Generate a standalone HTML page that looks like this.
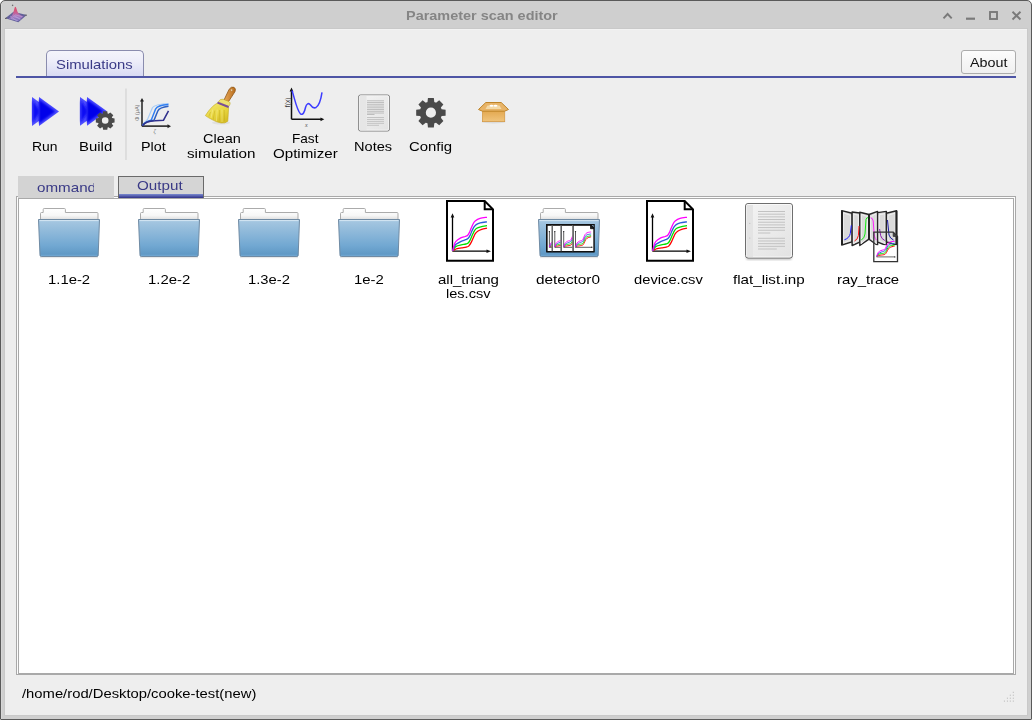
<!DOCTYPE html>
<html><head><meta charset="utf-8">
<style>
*{margin:0;padding:0;box-sizing:border-box}
html,body{width:1032px;height:720px;overflow:hidden;background:#ffffff}
body{position:relative;font-family:"Liberation Sans",sans-serif;font-size:13px}
.a{position:absolute}
.t{position:absolute;white-space:nowrap;font-size:13px;line-height:15px;transform-origin:0 0}
</style></head><body>
<div class="a" style="left:0;top:0;width:1032px;height:720px;background:#cfcfcf;border:1px solid #5a5a5a;border-radius:5px 5px 1px 1px"></div>
<div class="a" style="left:1px;top:4px;width:1px;height:715px;background:#d7d7d7"></div>
<div class="a" style="left:4px;top:28px;width:1024px;height:688px;background:#c9c9c9"></div>
<div class="a" style="left:5px;top:29px;width:1022px;height:686px;background:#eeeeee;border-top:1px solid #f3f3f3"></div>
<div class="a" style="left:46px;top:50px;width:98px;height:27px;border:1px solid #8a8cae;border-bottom:none;border-radius:5px 5px 0 0;background:linear-gradient(#f4f4fb 0%,#ededf9 40%,#d7d9f3 100%)"></div>
<div class="a" style="left:16px;top:76px;width:1000px;height:2px;background:#4e55a5"></div>
<div class="a" style="left:961px;top:50px;width:55px;height:24px;border:1px solid #acacac;border-radius:3px;background:linear-gradient(#fcfcfc,#f0f0f0)"></div>
<div class="a" style="left:16px;top:196px;width:1000px;height:479px;border:1px solid #a9a9a9;background:#fdfdfd"></div>
<div class="a" style="left:18px;top:198px;width:996px;height:476px;border:1px solid #a9a9a9;background:#ffffff"></div>
<div class="a" style="left:18px;top:176px;width:96px;height:22px;background:#d3d3d3"></div>
<div class="a" style="left:118px;top:176px;width:86px;height:22px;border:1px solid #6a6a6a;border-bottom:none;background:#d5d5d5"></div>
<div class="a" style="left:119px;top:194px;width:84px;height:4px;background:linear-gradient(#7b8bd0,#2f3088)"></div>
<svg class="a" style="left:0;top:0" width="1032" height="720" viewBox="0 0 1032 720"><defs>
<filter id="bl1" x="-20%" y="-20%" width="140%" height="140%"><feGaussianBlur stdDeviation="0.9"/></filter>
<linearGradient id="paperg" x1="0" y1="0" x2="0" y2="1"><stop offset="0" stop-color="#ffffff"/><stop offset="0.6" stop-color="#f7f7f7"/><stop offset="1" stop-color="#dcdcdc"/></linearGradient>
<linearGradient id="foldg" x1="0" y1="0" x2="0" y2="1"><stop offset="0" stop-color="#a8c8e1"/><stop offset="0.7" stop-color="#72a8d2"/><stop offset="1" stop-color="#5b95c2"/></linearGradient>
<linearGradient id="tabg" x1="0" y1="0" x2="0" y2="1"><stop offset="0" stop-color="#f3f3fb"/><stop offset="0.45" stop-color="#ececf8"/><stop offset="1" stop-color="#d6d8f2"/></linearGradient>
<linearGradient id="btng" x1="0" y1="0" x2="0" y2="1"><stop offset="0" stop-color="#fbfbfb"/><stop offset="1" stop-color="#efefef"/></linearGradient>
<linearGradient id="pageg" x1="0" y1="0" x2="1" y2="1"><stop offset="0" stop-color="#f4f4f4"/><stop offset="1" stop-color="#e2e2e2"/></linearGradient>
<linearGradient id="runA" x1="0" y1="0" x2="0" y2="1"><stop offset="0" stop-color="#4848ff"/><stop offset="0.5" stop-color="#0000f2"/><stop offset="1" stop-color="#4848ff"/></linearGradient>
<linearGradient id="boxg" x1="0" y1="0" x2="0" y2="1"><stop offset="0" stop-color="#e3a850"/><stop offset="1" stop-color="#f0c47c"/></linearGradient>
<linearGradient id="handleg" x1="0" y1="0" x2="1" y2="0"><stop offset="0" stop-color="#e8a858"/><stop offset="1" stop-color="#b86c1c"/></linearGradient>
<linearGradient id="broomg" x1="0" y1="0" x2="0.6" y2="1"><stop offset="0" stop-color="#f4ea78"/><stop offset="0.6" stop-color="#e8d640"/><stop offset="1" stop-color="#d8c028"/></linearGradient>
<linearGradient id="peakg" x1="0" y1="0" x2="0" y2="1"><stop offset="0" stop-color="#e04c68"/><stop offset="0.35" stop-color="#d05a88"/><stop offset="0.65" stop-color="#a878c0"/><stop offset="1" stop-color="#7a70b8"/></linearGradient>
</defs><path d="M5.3,18.3 L13.5,11.8 L26.7,15 L18.3,22.2 Z" fill="#62609a"/><path d="M8.5,18.8 Q12.8,16.5 14.3,9 Q15.3,4.8 16.5,8.8 Q18,15.5 23.5,16.3 L18.3,21.2 Z" fill="url(#peakg)"/><path d="M11,18.5 L18,20.5 M13,16.5 L20,18.5 M15,14.8 L22,16.6 M10,16 L17,21 M13.5,15 L20.5,19.5" stroke="#c8b8e8" stroke-width="0.6" opacity="0.7"/><line x1="12" y1="5" x2="13.2" y2="5.6" stroke="#666" stroke-width="1.2"/><line x1="5" y1="18.5" x2="7" y2="18" stroke="#555" stroke-width="1"/><line x1="24.5" y1="15.2" x2="27" y2="15.2" stroke="#666" stroke-width="1"/><path d="M943.5,18.3 L947.6,14 L951.7,18.3" fill="none" stroke="#7a7a7a" stroke-width="1.9"/><rect x="966" y="17.6" width="9" height="2.2" fill="#7a7a7a"/><rect x="990" y="12" width="7" height="7" fill="none" stroke="#7a7a7a" stroke-width="1.9"/><path d="M1012.5,11.7 L1020.5,19.5 M1020.5,11.7 L1012.5,19.5" fill="none" stroke="#7a7a7a" stroke-width="1.9"/><path d="M32,97 L32,126 L52,111.5 Z" fill="#5050ff"/><path d="M32.8,100 L32.8,123 L39,113.82 L39,109.18 Z" fill="#1010f4" filter="url(#bl1)"/><path d="M39,97 L39,126 L59,111.5 Z" fill="#4c4cff"/><path d="M39,99.6 L39,123.4 L55.4,111.5 Z" fill="#0000ea" filter="url(#bl1)"/><path d="M80,97 L80,125.7 L100,111.35 Z" fill="#5050ff"/><path d="M80.8,100 L80.8,122.7 L87,113.65 L87,109.05 Z" fill="#1010f4" filter="url(#bl1)"/><path d="M87,97 L87,125.7 L107,111.35 Z" fill="#4c4cff"/><path d="M87,99.6 L87,123.10000000000001 L103.4,111.35 Z" fill="#0000ea" filter="url(#bl1)"/><path d="M102.78,113.51 L103.10,111.13 L107.30,111.13 L107.62,113.51 L107.78,113.57 L107.95,113.63 L108.11,113.70 L108.28,113.77 L108.44,113.85 L110.34,112.39 L113.31,115.36 L111.85,117.26 L111.93,117.42 L112.00,117.59 L112.07,117.75 L112.13,117.92 L112.19,118.08 L114.57,118.40 L114.57,122.60 L112.19,122.92 L112.13,123.08 L112.07,123.25 L112.00,123.41 L111.93,123.58 L111.85,123.74 L113.31,125.64 L110.34,128.61 L108.44,127.15 L108.28,127.23 L108.11,127.30 L107.95,127.37 L107.78,127.43 L107.62,127.49 L107.30,129.87 L103.10,129.87 L102.78,127.49 L102.62,127.43 L102.45,127.37 L102.29,127.30 L102.12,127.23 L101.96,127.15 L100.06,128.61 L97.09,125.64 L98.55,123.74 L98.47,123.58 L98.40,123.41 L98.33,123.25 L98.27,123.08 L98.21,122.92 L95.83,122.60 L95.83,118.40 L98.21,118.09 L98.27,117.92 L98.33,117.75 L98.40,117.59 L98.47,117.42 L98.55,117.26 L97.09,115.36 L100.06,112.39 L101.96,113.85 L102.12,113.77 L102.29,113.70 L102.45,113.63 L102.62,113.57 Z M101.90,120.50 a3.3,3.3 0 1,0 6.6,0 a3.3,3.3 0 1,0 -6.6,0 Z" fill="#4a4a4a" fill-rule="evenodd"/><line x1="126" y1="88.5" x2="126" y2="160" stroke="#cdcdcd" stroke-width="1"/><path d="M142,126.2 L142,100.5 M142,126.2 L168,126.2" fill="none" stroke="#3a3a3a" stroke-width="1.7"/><path d="M140,101.5 L142,98 L144,101.5 Z M167.5,124.2 L171,126.2 L167.5,128.2 Z" fill="#222"/><path d="M142.5,125.5 C144,122.5 146,121 147.5,119.5 L152.5,107.5 C154,105.5 160,104 168.5,103.5" fill="none" stroke="#a9cdf6" stroke-width="1.2"/><path d="M142.5,125.5 C145,121.5 149,120.8 151.3,120 L155.6,109 C157,106.2 161,105 168.5,104.5" fill="none" stroke="#2f7ef2" stroke-width="1.5"/><path d="M142.5,125.5 C145,121.5 150,120.8 154,120.3 L157.8,111 C159.2,108 163,107 168.5,106.3" fill="none" stroke="#2d5fc2" stroke-width="1.5"/><path d="M142.5,125.8 C145,122 150,121 155,120.8 L163.5,120.2 L168.5,110.8" fill="none" stroke="#30308c" stroke-width="1.5"/><text x="0" y="0" transform="translate(138.5,121) rotate(-90)" font-size="5.5" fill="#777" font-family="Liberation Sans">&#934; (&#956;A)</text><text x="153.5" y="133" font-size="6" fill="#777" font-family="Liberation Serif" font-style="italic">&#950;</text><ellipse cx="221" cy="122.8" rx="9" ry="1.8" fill="#000" opacity="0.06"/><path d="M224,100 L229.2,89.2 Q231.3,86.3 234,87.3 Q236.2,88.6 235,91.6 L228.4,101.8 Z" fill="url(#handleg)" stroke="#8e5414" stroke-width="0.8"/><ellipse cx="231.6" cy="90.2" rx="0.9" ry="1.1" fill="#f3e2c0" stroke="#8e5414" stroke-width="0.3"/><path d="M218.3,101.8 Q220,98.6 223,99.2 L229,101.6 Q231,102.6 229.8,104.8 L228.6,106.6 Z" fill="#eee070" stroke="#b8a020" stroke-width="0.5"/><path d="M217.6,103 L228.6,107.3 Q228.3,114 227.8,121.2 Q225,123.6 221,123 Q216,122 212,119.6 Q208,117.6 205.4,115.6 Q208.5,110.5 212.5,106.6 Q215,104.3 217.6,103 Z" fill="url(#broomg)" stroke="#c4aa22" stroke-width="0.6"/><path d="M217.5,102.6 L228.6,107" stroke="#7a4e98" stroke-width="2"/><path d="M210.5,112 L208.8,116.5 M214.8,110.5 L213.2,119.6 M219.6,110 L219.2,122 M224.2,110 L224.6,121.5" stroke="#c2aa20" stroke-width="0.6" opacity="0.8"/><path d="M212.8,109.5 L211,118 M217.2,109.5 L216.4,121 M222,109.5 L222,122" stroke="#fbf4a8" stroke-width="0.6" opacity="0.7"/><path d="M291.5,119.3 L291.5,90 M291.5,119.3 L321,119.3" fill="none" stroke="#111" stroke-width="1.5"/><path d="M289.6,91.5 L291.5,87.5 L293.4,91.5 Z M320.5,117.4 L324.3,119.3 L320.5,121.2 Z" fill="#111"/><path d="M292,90.5 C294.5,98 297,111 300.5,113.8 C303,115.5 304.5,112 305.5,107.5 C306.5,103.5 308.5,102.5 310.5,105 C312,107.2 313.5,108.8 316,107.5 C319,105.5 321,99 322,92.3" fill="none" stroke="#3c3cff" stroke-width="1.5"/><text x="0" y="0" transform="translate(289.8,107.2) rotate(-90)" font-size="6.8" fill="#333" font-family="Liberation Sans">f(x)</text><text x="305" y="126.5" font-size="6" fill="#555" font-family="Liberation Serif" font-style="italic">x</text><rect x="358.5" y="95" width="31" height="36" rx="2" ry="2" fill="url(#pageg)" stroke="#7c7c7c" stroke-width="1"/><rect x="359.3" y="95.8" width="29.4" height="34.4" rx="1.5" fill="none" stroke="#fafafa" stroke-width="0.8"/><rect x="359.5" y="96" width="7" height="34" fill="#e6e6e6"/><line x1="367" y1="100.80" x2="384" y2="100.80" stroke="#bdbdbd" stroke-width="1"/><line x1="367" y1="102.55" x2="384" y2="102.55" stroke="#bdbdbd" stroke-width="1"/><line x1="367" y1="104.30" x2="384" y2="104.30" stroke="#bdbdbd" stroke-width="1"/><line x1="367" y1="106.05" x2="384" y2="106.05" stroke="#bdbdbd" stroke-width="1"/><line x1="367" y1="107.80" x2="384" y2="107.80" stroke="#bdbdbd" stroke-width="1"/><line x1="367" y1="109.55" x2="384" y2="109.55" stroke="#bdbdbd" stroke-width="1"/><line x1="367" y1="111.30" x2="384" y2="111.30" stroke="#bdbdbd" stroke-width="1"/><line x1="367" y1="113.05" x2="384" y2="113.05" stroke="#bdbdbd" stroke-width="1"/><line x1="367" y1="114.5" x2="374.5" y2="114.5" stroke="#bdbdbd" stroke-width="1"/><line x1="367" y1="117.50" x2="384" y2="117.50" stroke="#c3c3c3" stroke-width="1"/><line x1="367" y1="119.45" x2="384" y2="119.45" stroke="#c3c3c3" stroke-width="1"/><line x1="367" y1="121.40" x2="384" y2="121.40" stroke="#c3c3c3" stroke-width="1"/><line x1="367" y1="123.35" x2="384" y2="123.35" stroke="#c3c3c3" stroke-width="1"/><line x1="367" y1="125.3" x2="379" y2="125.3" stroke="#c3c3c3" stroke-width="1"/><path d="M427.51,102.03 L427.95,97.99 L433.85,97.99 L434.29,102.03 L434.65,102.15 L435.01,102.28 L435.36,102.43 L435.71,102.58 L436.05,102.75 L439.21,100.21 L443.39,104.39 L440.85,107.55 L441.02,107.89 L441.17,108.24 L441.32,108.59 L441.45,108.95 L441.57,109.31 L445.61,109.75 L445.61,115.65 L441.57,116.09 L441.45,116.45 L441.32,116.81 L441.17,117.16 L441.02,117.51 L440.85,117.85 L443.39,121.01 L439.21,125.19 L436.05,122.65 L435.71,122.82 L435.36,122.97 L435.01,123.12 L434.65,123.25 L434.29,123.37 L433.85,127.41 L427.95,127.41 L427.51,123.37 L427.15,123.25 L426.79,123.12 L426.44,122.97 L426.09,122.82 L425.75,122.65 L422.59,125.19 L418.41,121.01 L420.95,117.85 L420.78,117.51 L420.63,117.16 L420.48,116.81 L420.35,116.45 L420.23,116.09 L416.19,115.65 L416.19,109.75 L420.23,109.31 L420.35,108.95 L420.48,108.59 L420.63,108.24 L420.78,107.89 L420.95,107.55 L418.41,104.39 L422.59,100.21 L425.75,102.75 L426.09,102.58 L426.44,102.43 L426.79,102.28 L427.15,102.15 Z M425.80,112.70 a5.1,5.1 0 1,0 10.2,0 a5.1,5.1 0 1,0 -10.2,0 Z" fill="#4a4a4a" fill-rule="evenodd"/><ellipse cx="493.5" cy="122" rx="12" ry="1.5" fill="#000" opacity="0.08"/><rect x="482.5" y="110.8" width="22.2" height="10.8" fill="url(#boxg)" stroke="#d49a48" stroke-width="0.8"/><path d="M478.5,109.5 L485.8,102.5 L501.2,102.5 L508.5,109.5 L504.5,111.2 L482.5,111.2 Z" fill="#e8b468" stroke="#bf8428" stroke-width="1"/><path d="M487.5,105.5 L499.5,105.5 L501.5,109 L485.5,109 Z" fill="#f3d9a8"/><ellipse cx="491.5" cy="105.8" rx="2" ry="1" fill="#ffffff"/><ellipse cx="495.5" cy="105.8" rx="2" ry="1" fill="#ffffff"/><rect x="40" y="256.6" width="58" height="1.6" fill="#000" opacity="0.09"/><path d="M40.5,220 L40.5,213.5 Q40.5,212.5 41.5,212.5 L43.2,212.5 L43.2,209.5 Q43.2,208.5 44.2,208.5 L64.4,208.5 Q65.4,208.5 65.4,209.5 L65.4,212.5 L97,212.5 Q98,212.5 98,213.5 L98,220 Z" fill="url(#paperg)" stroke="#ababab" stroke-width="1"/><path d="M38.5,219.5 L99.5,219.5 L98.2,255.3 Q98.1,256.5 96.9,256.5 L41.3,256.5 Q40.1,256.5 40.0,255.3 Z" fill="url(#foldg)" stroke="#6f8aa3" stroke-width="1"/><line x1="39.5" y1="220.6" x2="98.5" y2="220.6" stroke="#d4e6f3" stroke-width="1"/><line x1="41" y1="255.3" x2="97" y2="255.3" stroke="#7db3db" stroke-width="0.8" opacity="0.8"/><rect x="140" y="256.6" width="58" height="1.6" fill="#000" opacity="0.09"/><path d="M140.5,220 L140.5,213.5 Q140.5,212.5 141.5,212.5 L143.2,212.5 L143.2,209.5 Q143.2,208.5 144.2,208.5 L164.4,208.5 Q165.4,208.5 165.4,209.5 L165.4,212.5 L197,212.5 Q198,212.5 198,213.5 L198,220 Z" fill="url(#paperg)" stroke="#ababab" stroke-width="1"/><path d="M138.5,219.5 L199.5,219.5 L198.2,255.3 Q198.1,256.5 196.9,256.5 L141.3,256.5 Q140.1,256.5 140.0,255.3 Z" fill="url(#foldg)" stroke="#6f8aa3" stroke-width="1"/><line x1="139.5" y1="220.6" x2="198.5" y2="220.6" stroke="#d4e6f3" stroke-width="1"/><line x1="141" y1="255.3" x2="197" y2="255.3" stroke="#7db3db" stroke-width="0.8" opacity="0.8"/><rect x="240" y="256.6" width="58" height="1.6" fill="#000" opacity="0.09"/><path d="M240.5,220 L240.5,213.5 Q240.5,212.5 241.5,212.5 L243.2,212.5 L243.2,209.5 Q243.2,208.5 244.2,208.5 L264.4,208.5 Q265.4,208.5 265.4,209.5 L265.4,212.5 L297,212.5 Q298,212.5 298,213.5 L298,220 Z" fill="url(#paperg)" stroke="#ababab" stroke-width="1"/><path d="M238.5,219.5 L299.5,219.5 L298.2,255.3 Q298.1,256.5 296.9,256.5 L241.3,256.5 Q240.1,256.5 240.0,255.3 Z" fill="url(#foldg)" stroke="#6f8aa3" stroke-width="1"/><line x1="239.5" y1="220.6" x2="298.5" y2="220.6" stroke="#d4e6f3" stroke-width="1"/><line x1="241" y1="255.3" x2="297" y2="255.3" stroke="#7db3db" stroke-width="0.8" opacity="0.8"/><rect x="340" y="256.6" width="58" height="1.6" fill="#000" opacity="0.09"/><path d="M340.5,220 L340.5,213.5 Q340.5,212.5 341.5,212.5 L343.2,212.5 L343.2,209.5 Q343.2,208.5 344.2,208.5 L364.4,208.5 Q365.4,208.5 365.4,209.5 L365.4,212.5 L397,212.5 Q398,212.5 398,213.5 L398,220 Z" fill="url(#paperg)" stroke="#ababab" stroke-width="1"/><path d="M338.5,219.5 L399.5,219.5 L398.2,255.3 Q398.1,256.5 396.9,256.5 L341.3,256.5 Q340.1,256.5 340.0,255.3 Z" fill="url(#foldg)" stroke="#6f8aa3" stroke-width="1"/><line x1="339.5" y1="220.6" x2="398.5" y2="220.6" stroke="#d4e6f3" stroke-width="1"/><line x1="341" y1="255.3" x2="397" y2="255.3" stroke="#7db3db" stroke-width="0.8" opacity="0.8"/><rect x="540" y="256.6" width="58" height="1.6" fill="#000" opacity="0.09"/><path d="M540.5,220 L540.5,213.5 Q540.5,212.5 541.5,212.5 L543.2,212.5 L543.2,209.5 Q543.2,208.5 544.2,208.5 L564.4,208.5 Q565.4,208.5 565.4,209.5 L565.4,212.5 L597,212.5 Q598,212.5 598,213.5 L598,220 Z" fill="url(#paperg)" stroke="#ababab" stroke-width="1"/><path d="M538.5,219.5 L599.5,219.5 L598.2,255.3 Q598.1,256.5 596.9,256.5 L541.3,256.5 Q540.1,256.5 540.0,255.3 Z" fill="url(#foldg)" stroke="#6f8aa3" stroke-width="1"/><line x1="539.5" y1="220.6" x2="598.5" y2="220.6" stroke="#d4e6f3" stroke-width="1"/><line x1="541" y1="255.3" x2="597" y2="255.3" stroke="#7db3db" stroke-width="0.8" opacity="0.8"/><clipPath id="dp0"><rect x="546.9" y="224" width="5.399999999999977" height="29"/></clipPath><g clip-path="url(#dp0)"><path d="M546.9,225 L564.4,225 L568.1,228.7 L568.1,251.6 L546.9,251.6 Z" fill="#fff" stroke="#111" stroke-width="1.3"/><path d="M564.4,225 L564.4,228.7 L568.1,228.7 Z" fill="#222" stroke="#111" stroke-width="0.8"/><line x1="549.4" y1="247.3" x2="549.4" y2="231.5" stroke="#333" stroke-width="0.8"/><circle cx="549.4" cy="231.6" r="0.7" fill="#222"/><line x1="549.4" y1="247.3" x2="565.6999999999999" y2="247.3" stroke="#333" stroke-width="0.8"/><circle cx="565.6999999999999" cy="247.3" r="0.7" fill="#222"/><path d="M549.60,247.10 C549.75,247.00 550.16,246.68 550.50,246.52 C550.84,246.35 551.10,246.24 551.62,246.11 C552.15,245.98 552.97,245.87 553.65,245.75 C554.33,245.63 555.15,245.53 555.68,245.39 C556.20,245.26 556.43,245.29 556.80,244.94 C557.18,244.59 557.58,243.91 557.93,243.28 C558.27,242.65 558.56,241.81 558.87,241.16 C559.18,240.51 559.44,239.84 559.77,239.36 C560.10,238.88 560.37,238.60 560.85,238.28 C561.33,237.96 561.95,237.67 562.65,237.43 C563.35,237.19 564.64,236.94 565.03,236.84" fill="none" stroke="#ff0000" stroke-width="0.9"/><path d="M549.60,247.10 C549.71,246.91 550.01,246.32 550.27,245.98 C550.54,245.63 550.65,245.29 551.18,245.03 C551.70,244.77 552.71,244.57 553.43,244.40 C554.14,244.23 554.93,244.13 555.45,244.00 C555.98,243.86 556.24,243.90 556.58,243.59 C556.91,243.28 557.15,242.79 557.48,242.15 C557.80,241.51 558.19,240.46 558.51,239.77 C558.83,239.07 559.10,238.44 559.41,237.97 C559.72,237.49 559.93,237.21 560.40,236.93 C560.87,236.65 561.43,236.50 562.20,236.30 C562.97,236.10 564.56,235.81 565.03,235.72" fill="none" stroke="#00e000" stroke-width="0.9"/><path d="M549.60,247.10 C549.70,246.83 549.94,245.98 550.19,245.48 C550.43,244.99 550.55,244.57 551.09,244.13 C551.62,243.69 552.70,243.17 553.43,242.83 C554.15,242.48 554.93,242.29 555.45,242.06 C555.98,241.83 556.24,241.78 556.58,241.43 C556.91,241.09 557.18,240.58 557.48,239.99 C557.77,239.40 558.08,238.51 558.38,237.88 C558.67,237.25 558.97,236.65 559.27,236.21 C559.58,235.78 559.73,235.55 560.18,235.27 C560.63,234.98 561.17,234.71 561.98,234.50 C562.78,234.29 564.52,234.09 565.03,234.01" fill="none" stroke="#2a5fd8" stroke-width="0.9"/><path d="M549.60,247.10 C549.69,246.73 549.91,245.55 550.14,244.85 C550.37,244.15 550.44,243.52 550.95,242.92 C551.46,242.32 552.49,241.63 553.20,241.25 C553.91,240.87 554.72,240.80 555.23,240.62 C555.74,240.44 555.96,240.44 556.26,240.17 C556.56,239.90 556.75,239.56 557.02,239.00 C557.30,238.45 557.62,237.53 557.93,236.84 C558.23,236.15 558.53,235.40 558.83,234.86 C559.12,234.32 559.22,234.01 559.73,233.60 C560.24,233.20 561.00,232.70 561.88,232.43 C562.77,232.16 564.51,232.06 565.03,231.98" fill="none" stroke="#ff00ff" stroke-width="0.9"/></g><clipPath id="dp1"><rect x="552.3" y="224" width="8.900000000000091" height="29"/></clipPath><g clip-path="url(#dp1)"><path d="M552.3,225 L569.8,225 L573.5,228.7 L573.5,251.6 L552.3,251.6 Z" fill="#fff" stroke="#111" stroke-width="1.3"/><path d="M569.8,225 L569.8,228.7 L573.5,228.7 Z" fill="#222" stroke="#111" stroke-width="0.8"/><line x1="554.8" y1="247.3" x2="554.8" y2="231.5" stroke="#333" stroke-width="0.8"/><circle cx="554.8" cy="231.6" r="0.7" fill="#222"/><line x1="554.8" y1="247.3" x2="571.0999999999999" y2="247.3" stroke="#333" stroke-width="0.8"/><circle cx="571.0999999999999" cy="247.3" r="0.7" fill="#222"/><path d="M555.00,247.10 C555.15,247.00 555.56,246.68 555.90,246.52 C556.24,246.35 556.50,246.24 557.02,246.11 C557.55,245.98 558.38,245.87 559.05,245.75 C559.72,245.63 560.55,245.53 561.08,245.39 C561.60,245.26 561.83,245.29 562.20,244.94 C562.58,244.59 562.98,243.91 563.33,243.28 C563.67,242.65 563.96,241.81 564.27,241.16 C564.58,240.51 564.84,239.84 565.17,239.36 C565.50,238.88 565.77,238.60 566.25,238.28 C566.73,237.96 567.35,237.67 568.05,237.43 C568.75,237.19 570.04,236.94 570.43,236.84" fill="none" stroke="#ff0000" stroke-width="0.9"/><path d="M555.00,247.10 C555.11,246.91 555.41,246.32 555.67,245.98 C555.94,245.63 556.05,245.29 556.58,245.03 C557.10,244.77 558.11,244.57 558.83,244.40 C559.54,244.23 560.33,244.13 560.85,244.00 C561.38,243.86 561.64,243.90 561.98,243.59 C562.31,243.28 562.55,242.79 562.88,242.15 C563.20,241.51 563.59,240.46 563.91,239.77 C564.23,239.07 564.49,238.44 564.81,237.97 C565.12,237.49 565.33,237.21 565.80,236.93 C566.26,236.65 566.83,236.50 567.60,236.30 C568.37,236.10 569.96,235.81 570.43,235.72" fill="none" stroke="#00e000" stroke-width="0.9"/><path d="M555.00,247.10 C555.10,246.83 555.34,245.98 555.59,245.48 C555.83,244.99 555.95,244.57 556.49,244.13 C557.02,243.69 558.10,243.17 558.83,242.83 C559.55,242.48 560.33,242.29 560.85,242.06 C561.38,241.83 561.64,241.78 561.98,241.43 C562.31,241.09 562.58,240.58 562.88,239.99 C563.17,239.40 563.48,238.51 563.77,237.88 C564.07,237.25 564.38,236.65 564.67,236.21 C564.97,235.78 565.12,235.55 565.58,235.27 C566.03,234.98 566.57,234.71 567.38,234.50 C568.18,234.29 569.92,234.09 570.43,234.01" fill="none" stroke="#2a5fd8" stroke-width="0.9"/><path d="M555.00,247.10 C555.09,246.73 555.31,245.55 555.54,244.85 C555.76,244.15 555.84,243.52 556.35,242.92 C556.86,242.32 557.89,241.63 558.60,241.25 C559.31,240.87 560.12,240.80 560.62,240.62 C561.13,240.44 561.36,240.44 561.66,240.17 C561.96,239.90 562.15,239.56 562.42,239.00 C562.70,238.45 563.03,237.53 563.33,236.84 C563.62,236.15 563.93,235.40 564.23,234.86 C564.52,234.32 564.62,234.01 565.12,233.60 C565.63,233.20 566.40,232.70 567.28,232.43 C568.17,232.16 569.91,232.06 570.43,231.98" fill="none" stroke="#ff00ff" stroke-width="0.9"/></g><line x1="552.0" y1="225" x2="552.0" y2="252" stroke="#7a7a7a" stroke-width="1.2"/><clipPath id="dp2"><rect x="561.2" y="224" width="11.799999999999955" height="29"/></clipPath><g clip-path="url(#dp2)"><path d="M561.2,225 L578.7,225 L582.4000000000001,228.7 L582.4000000000001,251.6 L561.2,251.6 Z" fill="#fff" stroke="#111" stroke-width="1.3"/><path d="M578.7,225 L578.7,228.7 L582.4000000000001,228.7 Z" fill="#222" stroke="#111" stroke-width="0.8"/><line x1="563.7" y1="247.3" x2="563.7" y2="231.5" stroke="#333" stroke-width="0.8"/><circle cx="563.7" cy="231.6" r="0.7" fill="#222"/><line x1="563.7" y1="247.3" x2="580.0" y2="247.3" stroke="#333" stroke-width="0.8"/><circle cx="580.0" cy="247.3" r="0.7" fill="#222"/><path d="M563.90,247.10 C564.05,247.00 564.46,246.68 564.80,246.52 C565.14,246.35 565.40,246.24 565.93,246.11 C566.45,245.98 567.28,245.87 567.95,245.75 C568.62,245.63 569.45,245.53 569.98,245.39 C570.50,245.26 570.73,245.29 571.10,244.94 C571.48,244.59 571.88,243.91 572.23,243.28 C572.57,242.65 572.86,241.81 573.17,241.16 C573.48,240.51 573.74,239.84 574.07,239.36 C574.40,238.88 574.67,238.60 575.15,238.28 C575.63,237.96 576.25,237.67 576.95,237.43 C577.65,237.19 578.94,236.94 579.34,236.84" fill="none" stroke="#ff0000" stroke-width="0.9"/><path d="M563.90,247.10 C564.01,246.91 564.31,246.32 564.58,245.98 C564.84,245.63 564.95,245.29 565.48,245.03 C566.00,244.77 567.01,244.57 567.73,244.40 C568.44,244.23 569.23,244.13 569.75,244.00 C570.28,243.86 570.54,243.90 570.88,243.59 C571.21,243.28 571.45,242.79 571.78,242.15 C572.10,241.51 572.49,240.46 572.81,239.77 C573.13,239.07 573.39,238.44 573.71,237.97 C574.03,237.49 574.24,237.21 574.70,236.93 C575.17,236.65 575.73,236.50 576.50,236.30 C577.27,236.10 578.86,235.81 579.34,235.72" fill="none" stroke="#00e000" stroke-width="0.9"/><path d="M563.90,247.10 C564.00,246.83 564.24,245.98 564.49,245.48 C564.73,244.99 564.85,244.57 565.39,244.13 C565.93,243.69 567.00,243.17 567.73,242.83 C568.45,242.48 569.23,242.29 569.75,242.06 C570.28,241.83 570.54,241.78 570.88,241.43 C571.21,241.09 571.48,240.58 571.78,239.99 C572.08,239.40 572.38,238.51 572.68,237.88 C572.98,237.25 573.28,236.65 573.58,236.21 C573.88,235.78 574.03,235.55 574.48,235.27 C574.93,234.98 575.47,234.71 576.28,234.50 C577.09,234.29 578.83,234.09 579.34,234.01" fill="none" stroke="#2a5fd8" stroke-width="0.9"/><path d="M563.90,247.10 C563.99,246.73 564.22,245.55 564.44,244.85 C564.67,244.15 564.74,243.52 565.25,242.92 C565.76,242.32 566.79,241.63 567.50,241.25 C568.21,240.87 569.02,240.80 569.53,240.62 C570.04,240.44 570.26,240.44 570.56,240.17 C570.86,239.90 571.05,239.56 571.33,239.00 C571.60,238.45 571.93,237.53 572.23,236.84 C572.53,236.15 572.83,235.40 573.13,234.86 C573.43,234.32 573.52,234.01 574.03,233.60 C574.54,233.20 575.30,232.70 576.19,232.43 C577.07,232.16 578.81,232.06 579.34,231.98" fill="none" stroke="#ff00ff" stroke-width="0.9"/></g><line x1="560.9000000000001" y1="225" x2="560.9000000000001" y2="252" stroke="#7a7a7a" stroke-width="1.2"/><clipPath id="dp3"><rect x="573.0" y="224" width="21.0" height="29"/></clipPath><g clip-path="url(#dp3)"><path d="M573.0,225 L590.5,225 L594.2,228.7 L594.2,251.6 L573.0,251.6 Z" fill="#fff" stroke="#111" stroke-width="1.3"/><path d="M590.5,225 L590.5,228.7 L594.2,228.7 Z" fill="#222" stroke="#111" stroke-width="0.8"/><line x1="575.5" y1="247.3" x2="575.5" y2="231.5" stroke="#333" stroke-width="0.8"/><circle cx="575.5" cy="231.6" r="0.7" fill="#222"/><line x1="575.5" y1="247.3" x2="591.8" y2="247.3" stroke="#333" stroke-width="0.8"/><circle cx="591.8" cy="247.3" r="0.7" fill="#222"/><path d="M575.70,247.10 C575.85,247.00 576.26,246.68 576.60,246.52 C576.94,246.35 577.20,246.24 577.73,246.11 C578.25,245.98 579.08,245.87 579.75,245.75 C580.42,245.63 581.25,245.53 581.78,245.39 C582.30,245.26 582.53,245.29 582.90,244.94 C583.28,244.59 583.68,243.91 584.03,243.28 C584.37,242.65 584.66,241.81 584.97,241.16 C585.28,240.51 585.54,239.84 585.87,239.36 C586.20,238.88 586.47,238.60 586.95,238.28 C587.43,237.96 588.05,237.67 588.75,237.43 C589.45,237.19 590.74,236.94 591.13,236.84" fill="none" stroke="#ff0000" stroke-width="0.9"/><path d="M575.70,247.10 C575.81,246.91 576.11,246.32 576.38,245.98 C576.64,245.63 576.75,245.29 577.28,245.03 C577.80,244.77 578.81,244.57 579.53,244.40 C580.24,244.23 581.03,244.13 581.55,244.00 C582.08,243.86 582.34,243.90 582.68,243.59 C583.01,243.28 583.25,242.79 583.58,242.15 C583.90,241.51 584.29,240.46 584.61,239.77 C584.93,239.07 585.19,238.44 585.51,237.97 C585.83,237.49 586.03,237.21 586.50,236.93 C586.97,236.65 587.53,236.50 588.30,236.30 C589.07,236.10 590.66,235.81 591.13,235.72" fill="none" stroke="#00e000" stroke-width="0.9"/><path d="M575.70,247.10 C575.80,246.83 576.04,245.98 576.29,245.48 C576.53,244.99 576.65,244.57 577.19,244.13 C577.73,243.69 578.80,243.17 579.53,242.83 C580.25,242.48 581.03,242.29 581.55,242.06 C582.08,241.83 582.34,241.78 582.68,241.43 C583.01,241.09 583.28,240.58 583.58,239.99 C583.88,239.40 584.18,238.51 584.48,237.88 C584.77,237.25 585.08,236.65 585.38,236.21 C585.67,235.78 585.83,235.55 586.28,235.27 C586.73,234.98 587.27,234.71 588.08,234.50 C588.88,234.29 590.62,234.09 591.13,234.01" fill="none" stroke="#2a5fd8" stroke-width="0.9"/><path d="M575.70,247.10 C575.79,246.73 576.01,245.55 576.24,244.85 C576.47,244.15 576.54,243.52 577.05,242.92 C577.56,242.32 578.59,241.63 579.30,241.25 C580.01,240.87 580.82,240.80 581.33,240.62 C581.84,240.44 582.06,240.44 582.36,240.17 C582.66,239.90 582.85,239.56 583.12,239.00 C583.40,238.45 583.73,237.53 584.03,236.84 C584.33,236.15 584.63,235.40 584.93,234.86 C585.23,234.32 585.32,234.01 585.83,233.60 C586.34,233.20 587.10,232.70 587.99,232.43 C588.87,232.16 590.61,232.06 591.13,231.98" fill="none" stroke="#ff00ff" stroke-width="0.9"/></g><line x1="572.7" y1="225" x2="572.7" y2="252" stroke="#7a7a7a" stroke-width="1.2"/><rect x="546.6" y="224.6" width="47.6" height="27.2" fill="none" stroke="#111" stroke-width="1.2"/><path d="M447,201 L484.7,201 L493,209.3 L493,260.7 L447,260.7 Z" fill="#fff" stroke="#000" stroke-width="2"/><path d="M484.7,201 L484.7,209.3 L493,209.3" fill="none" stroke="#000" stroke-width="2"/><line x1="452.5" y1="251.2" x2="452.5" y2="216" stroke="#000" stroke-width="1.3"/><path d="M450.7,217.5 L452.5,213.2 L454.3,217.5 Z" fill="#111"/><line x1="452.5" y1="251.2" x2="488" y2="251.2" stroke="#000" stroke-width="1.3"/><path d="M486.5,249.39999999999998 L491,251.2 L486.5,253.0 Z" fill="#111"/><path d="M452.70,250.90 C453.03,250.68 453.95,249.97 454.70,249.60 C455.45,249.23 456.03,248.98 457.20,248.70 C458.37,248.42 460.20,248.17 461.70,247.90 C463.20,247.63 465.03,247.40 466.20,247.10 C467.37,246.80 467.87,246.88 468.70,246.10 C469.53,245.32 470.43,243.80 471.20,242.40 C471.97,241.00 472.62,239.15 473.30,237.70 C473.98,236.25 474.57,234.77 475.30,233.70 C476.03,232.63 476.63,232.02 477.70,231.30 C478.77,230.58 480.15,229.93 481.70,229.40 C483.25,228.87 486.12,228.32 487.00,228.10" fill="none" stroke="#ff0000" stroke-width="1.3"/><path d="M452.70,250.90 C452.95,250.48 453.62,249.17 454.20,248.40 C454.78,247.63 455.03,246.88 456.20,246.30 C457.37,245.72 459.62,245.28 461.20,244.90 C462.78,244.52 464.53,244.30 465.70,244.00 C466.87,243.70 467.45,243.78 468.20,243.10 C468.95,242.42 469.48,241.32 470.20,239.90 C470.92,238.48 471.78,236.15 472.50,234.60 C473.22,233.05 473.80,231.65 474.50,230.60 C475.20,229.55 475.67,228.92 476.70,228.30 C477.73,227.68 478.98,227.35 480.70,226.90 C482.42,226.45 485.95,225.82 487.00,225.60" fill="none" stroke="#00e000" stroke-width="1.3"/><path d="M452.70,250.90 C452.92,250.30 453.45,248.40 454.00,247.30 C454.55,246.20 454.80,245.28 456.00,244.30 C457.20,243.32 459.58,242.17 461.20,241.40 C462.82,240.63 464.53,240.22 465.70,239.70 C466.87,239.18 467.45,239.07 468.20,238.30 C468.95,237.53 469.53,236.42 470.20,235.10 C470.87,233.78 471.53,231.80 472.20,230.40 C472.87,229.00 473.53,227.67 474.20,226.70 C474.87,225.73 475.20,225.23 476.20,224.60 C477.20,223.97 478.40,223.37 480.20,222.90 C482.00,222.43 485.87,221.98 487.00,221.80" fill="none" stroke="#2a5fd8" stroke-width="1.3"/><path d="M452.70,250.90 C452.90,250.07 453.40,247.45 453.90,245.90 C454.40,244.35 454.57,242.93 455.70,241.60 C456.83,240.27 459.12,238.75 460.70,237.90 C462.28,237.05 464.07,236.90 465.20,236.50 C466.33,236.10 466.83,236.10 467.50,235.50 C468.17,234.90 468.58,234.13 469.20,232.90 C469.82,231.67 470.53,229.63 471.20,228.10 C471.87,226.57 472.53,224.90 473.20,223.70 C473.87,222.50 474.07,221.80 475.20,220.90 C476.33,220.00 478.03,218.90 480.00,218.30 C481.97,217.70 485.83,217.47 487.00,217.30" fill="none" stroke="#ff00ff" stroke-width="1.3"/><path d="M647,201 L684.7,201 L693,209.3 L693,260.7 L647,260.7 Z" fill="#fff" stroke="#000" stroke-width="2"/><path d="M684.7,201 L684.7,209.3 L693,209.3" fill="none" stroke="#000" stroke-width="2"/><line x1="652.5" y1="251.2" x2="652.5" y2="216" stroke="#000" stroke-width="1.3"/><path d="M650.7,217.5 L652.5,213.2 L654.3,217.5 Z" fill="#111"/><line x1="652.5" y1="251.2" x2="688" y2="251.2" stroke="#000" stroke-width="1.3"/><path d="M686.5,249.39999999999998 L691,251.2 L686.5,253.0 Z" fill="#111"/><path d="M652.70,250.90 C653.03,250.68 653.95,249.97 654.70,249.60 C655.45,249.23 656.03,248.98 657.20,248.70 C658.37,248.42 660.20,248.17 661.70,247.90 C663.20,247.63 665.03,247.40 666.20,247.10 C667.37,246.80 667.87,246.88 668.70,246.10 C669.53,245.32 670.43,243.80 671.20,242.40 C671.97,241.00 672.62,239.15 673.30,237.70 C673.98,236.25 674.57,234.77 675.30,233.70 C676.03,232.63 676.63,232.02 677.70,231.30 C678.77,230.58 680.15,229.93 681.70,229.40 C683.25,228.87 686.12,228.32 687.00,228.10" fill="none" stroke="#ff0000" stroke-width="1.3"/><path d="M652.70,250.90 C652.95,250.48 653.62,249.17 654.20,248.40 C654.78,247.63 655.03,246.88 656.20,246.30 C657.37,245.72 659.62,245.28 661.20,244.90 C662.78,244.52 664.53,244.30 665.70,244.00 C666.87,243.70 667.45,243.78 668.20,243.10 C668.95,242.42 669.48,241.32 670.20,239.90 C670.92,238.48 671.78,236.15 672.50,234.60 C673.22,233.05 673.80,231.65 674.50,230.60 C675.20,229.55 675.67,228.92 676.70,228.30 C677.73,227.68 678.98,227.35 680.70,226.90 C682.42,226.45 685.95,225.82 687.00,225.60" fill="none" stroke="#00e000" stroke-width="1.3"/><path d="M652.70,250.90 C652.92,250.30 653.45,248.40 654.00,247.30 C654.55,246.20 654.80,245.28 656.00,244.30 C657.20,243.32 659.58,242.17 661.20,241.40 C662.82,240.63 664.53,240.22 665.70,239.70 C666.87,239.18 667.45,239.07 668.20,238.30 C668.95,237.53 669.53,236.42 670.20,235.10 C670.87,233.78 671.53,231.80 672.20,230.40 C672.87,229.00 673.53,227.67 674.20,226.70 C674.87,225.73 675.20,225.23 676.20,224.60 C677.20,223.97 678.40,223.37 680.20,222.90 C682.00,222.43 685.87,221.98 687.00,221.80" fill="none" stroke="#2a5fd8" stroke-width="1.3"/><path d="M652.70,250.90 C652.90,250.07 653.40,247.45 653.90,245.90 C654.40,244.35 654.57,242.93 655.70,241.60 C656.83,240.27 659.12,238.75 660.70,237.90 C662.28,237.05 664.07,236.90 665.20,236.50 C666.33,236.10 666.83,236.10 667.50,235.50 C668.17,234.90 668.58,234.13 669.20,232.90 C669.82,231.67 670.53,229.63 671.20,228.10 C671.87,226.57 672.53,224.90 673.20,223.70 C673.87,222.50 674.07,221.80 675.20,220.90 C676.33,220.00 678.03,218.90 680.00,218.30 C681.97,217.70 685.83,217.47 687.00,217.30" fill="none" stroke="#ff00ff" stroke-width="1.3"/><rect x="746" y="255.5" width="46" height="4.5" rx="2" fill="#000" opacity="0.22" filter="url(#bl1)"/><rect x="745.5" y="203.5" width="47" height="54.5" rx="2.5" ry="2.5" fill="url(#pageg)" stroke="#6e6e6e" stroke-width="1"/><rect x="746.5" y="204.5" width="45" height="52.5" rx="2" fill="none" stroke="#fbfbfb" stroke-width="0.8"/><rect x="746.5" y="205" width="6.5" height="52" fill="#e4e4e4"/><line x1="758" y1="211.50" x2="785" y2="211.50" stroke="#c2c2c2" stroke-width="1"/><line x1="758" y1="214.18" x2="785" y2="214.18" stroke="#c2c2c2" stroke-width="1"/><line x1="758" y1="216.86" x2="785" y2="216.86" stroke="#c2c2c2" stroke-width="1"/><line x1="758" y1="219.54" x2="785" y2="219.54" stroke="#c2c2c2" stroke-width="1"/><line x1="758" y1="222.22" x2="785" y2="222.22" stroke="#c2c2c2" stroke-width="1"/><line x1="758" y1="224.90" x2="785" y2="224.90" stroke="#c2c2c2" stroke-width="1"/><line x1="758" y1="227.58" x2="785" y2="227.58" stroke="#c2c2c2" stroke-width="1"/><line x1="758" y1="230.26" x2="785" y2="230.26" stroke="#c2c2c2" stroke-width="1"/><line x1="758" y1="233" x2="770.3" y2="233" stroke="#c2c2c2" stroke-width="1"/><line x1="758" y1="238.30" x2="785" y2="238.30" stroke="#c2c2c2" stroke-width="1"/><line x1="758" y1="240.98" x2="785" y2="240.98" stroke="#c2c2c2" stroke-width="1"/><line x1="758" y1="243.66" x2="785" y2="243.66" stroke="#c2c2c2" stroke-width="1"/><line x1="758" y1="246.34" x2="785" y2="246.34" stroke="#c2c2c2" stroke-width="1"/><line x1="758" y1="249" x2="776.8" y2="249" stroke="#c2c2c2" stroke-width="1"/><circle cx="749.8" cy="223.3" r="0.6" fill="#bbb"/><circle cx="749.8" cy="238" r="0.6" fill="#bbb"/><path d="M841.8,210.6 L852.1,213.2 L852.1,241.8 L841.8,245.0 Z" fill="#dadada" stroke="#262626" stroke-width="1.4" stroke-linejoin="round"/><path d="M843.4,212.79999999999998 L850.7,215.39999999999998 L850.7,240.0 L843.4,243.2 Z" fill="none" stroke="#f4f4f4" stroke-width="0.8"/><path d="M852.1,212.0 L859.8,213.0 L859.8,242.2 L852.1,245.5 Z" fill="#dadada" stroke="#262626" stroke-width="1.4" stroke-linejoin="round"/><path d="M853.7,214.2 L858.4,215.2 L858.4,240.39999999999998 L853.7,243.7 Z" fill="none" stroke="#f4f4f4" stroke-width="0.8"/><path d="M859.8,212.2 L869.0,214.5 L869.0,239.2 L859.8,245.5 Z" fill="#dadada" stroke="#262626" stroke-width="1.4" stroke-linejoin="round"/><path d="M861.4,214.39999999999998 L867.6,216.7 L867.6,237.39999999999998 L861.4,243.7 Z" fill="none" stroke="#f4f4f4" stroke-width="0.8"/><path d="M869.0,214.5 L877.6,211.4 L877.6,245.5 L869.0,239.2 Z" fill="#dadada" stroke="#262626" stroke-width="1.4" stroke-linejoin="round"/><path d="M870.6,216.7 L876.2,213.6 L876.2,243.7 L870.6,237.39999999999998 Z" fill="none" stroke="#f4f4f4" stroke-width="0.8"/><path d="M877.6,212.6 L886.4,211.4 L886.4,245.5 L877.6,242.2 Z" fill="#dadada" stroke="#262626" stroke-width="1.4" stroke-linejoin="round"/><path d="M879.2,214.79999999999998 L885.0,213.6 L885.0,243.7 L879.2,240.39999999999998 Z" fill="none" stroke="#f4f4f4" stroke-width="0.8"/><path d="M886.4,213.2 L896.6,210.8 L896.6,245.0 L886.4,241.8 Z" fill="#dadada" stroke="#262626" stroke-width="1.4" stroke-linejoin="round"/><path d="M888.0,215.39999999999998 L895.2,213.0 L895.2,243.2 L888.0,240.0 Z" fill="none" stroke="#f4f4f4" stroke-width="0.8"/><line x1="842" y1="210.6" x2="842" y2="245" stroke="#222" stroke-width="2"/><line x1="896.4" y1="210.8" x2="896.4" y2="245" stroke="#222" stroke-width="2"/><line x1="869" y1="214.5" x2="869" y2="239.2" stroke="#222" stroke-width="1.8"/><path d="M844.4,239.8 Q849.5,238 850.3,233.5 L851.3,225.3" fill="none" stroke="#1a1aff" stroke-width="1"/><path d="M854.5,241 Q857.8,239.5 858.4,235.5 L859,226" fill="none" stroke="#ff1a1a" stroke-width="1"/><path d="M861.2,240 Q864.5,238.5 865,234 L866,219.5 Q866.5,217.6 868,217.6" fill="none" stroke="#10ee10" stroke-width="1"/><path d="M870.6,217.8 Q872.6,217.8 873.2,221 L874.2,235 Q874.8,239.2 876.6,240.2" fill="none" stroke="#ff22ff" stroke-width="1"/><path d="M879.6,229 L880.6,235.5 Q881.5,239 884.8,240.5" fill="none" stroke="#8a1ab0" stroke-width="1"/><path d="M887.5,220 L889,235 Q890,238.5 893.5,240" fill="none" stroke="#1a1aa0" stroke-width="1"/><path d="M873.8,245.2 L897.5,245.2 L897.5,261.6 L873.8,261.6 Z" fill="#fff"/><path d="M873.8,232.2 L893.2,232.2 L897.5,236.4 L897.5,261.6 L873.8,261.6 Z" fill="none" stroke="#333" stroke-width="1.3"/><path d="M893.2,232.2 L893.2,236.4 L897.5,236.4 Z" fill="#444" stroke="#333" stroke-width="0.8"/><line x1="876.6" y1="256.9" x2="894.8" y2="256.9" stroke="#444" stroke-width="0.8"/><circle cx="894.8" cy="256.9" r="0.7" fill="#333"/><path d="M876.80,256.40 C876.97,256.30 877.45,255.98 877.84,255.81 C878.23,255.65 878.53,255.54 879.14,255.41 C879.75,255.28 880.70,255.17 881.48,255.05 C882.26,254.93 883.21,254.82 883.82,254.69 C884.43,254.55 884.69,254.59 885.12,254.24 C885.55,253.89 886.02,253.20 886.42,252.57 C886.82,251.94 887.16,251.11 887.51,250.46 C887.87,249.81 888.17,249.14 888.55,248.66 C888.93,248.18 889.25,247.90 889.80,247.58 C890.35,247.26 891.07,246.96 891.88,246.72 C892.69,246.48 894.18,246.24 894.64,246.14" fill="none" stroke="#ff0000" stroke-width="1.0"/><path d="M876.80,256.40 C876.93,256.21 877.28,255.62 877.58,255.27 C877.88,254.93 878.01,254.59 878.62,254.33 C879.23,254.07 880.40,253.87 881.22,253.70 C882.04,253.53 882.95,253.43 883.56,253.29 C884.17,253.16 884.47,253.20 884.86,252.89 C885.25,252.58 885.53,252.09 885.90,251.45 C886.27,250.81 886.72,249.76 887.10,249.06 C887.47,248.37 887.77,247.74 888.14,247.26 C888.50,246.79 888.74,246.51 889.28,246.23 C889.82,245.95 890.47,245.80 891.36,245.60 C892.25,245.40 894.09,245.11 894.64,245.01" fill="none" stroke="#00e000" stroke-width="1.0"/><path d="M876.80,256.40 C876.91,256.13 877.19,255.27 877.48,254.78 C877.76,254.28 877.89,253.87 878.52,253.43 C879.14,252.99 880.38,252.47 881.22,252.12 C882.06,251.78 882.95,251.59 883.56,251.36 C884.17,251.13 884.47,251.07 884.86,250.73 C885.25,250.38 885.55,249.88 885.90,249.29 C886.25,248.70 886.59,247.80 886.94,247.17 C887.29,246.54 887.63,245.94 887.98,245.51 C888.33,245.07 888.50,244.85 889.02,244.56 C889.54,244.28 890.16,244.01 891.10,243.80 C892.04,243.59 894.05,243.39 894.64,243.30" fill="none" stroke="#2a5fd8" stroke-width="1.0"/><path d="M876.80,256.40 C876.90,256.02 877.16,254.85 877.42,254.15 C877.68,253.45 877.77,252.81 878.36,252.21 C878.95,251.61 880.14,250.93 880.96,250.55 C881.78,250.17 882.71,250.10 883.30,249.92 C883.89,249.74 884.15,249.74 884.50,249.47 C884.84,249.20 885.06,248.85 885.38,248.30 C885.70,247.74 886.07,246.83 886.42,246.14 C886.77,245.45 887.11,244.70 887.46,244.16 C887.81,243.62 887.91,243.30 888.50,242.90 C889.09,242.49 889.97,242.00 891.00,241.73 C892.02,241.46 894.03,241.35 894.64,241.28" fill="none" stroke="#ff00ff" stroke-width="1.0"/><rect x="1012.8" y="691.8" width="1" height="1" fill="#b4b4b4"/><rect x="1009.8" y="694.7" width="1" height="1" fill="#b4b4b4"/><rect x="1012.8" y="694.7" width="1" height="1" fill="#b4b4b4"/><rect x="1006.9" y="697.7" width="1" height="1" fill="#b4b4b4"/><rect x="1009.8" y="697.7" width="1" height="1" fill="#b4b4b4"/><rect x="1012.8" y="697.7" width="1" height="1" fill="#b4b4b4"/><rect x="1003.9" y="700.6" width="1" height="1" fill="#b4b4b4"/><rect x="1006.9" y="700.6" width="1" height="1" fill="#b4b4b4"/><rect x="1009.8" y="700.6" width="1" height="1" fill="#b4b4b4"/><rect x="1012.8" y="700.6" width="1" height="1" fill="#b4b4b4"/></svg>
<div class="t" style="left:405.89px;top:8px;color:#858585;font-weight:bold;transform:scaleX(1.1111)">Parameter scan editor</div><div class="t" style="left:56.06px;top:57px;color:#3a3a86;font-weight:normal;transform:scaleX(1.1394)">Simulations</div><div class="t" style="left:969.50px;top:55px;color:#111111;font-weight:normal;transform:scaleX(1.1029)">About</div><div class="t" style="left:32.13px;top:139px;color:#000000;font-weight:normal;transform:scaleX(1.0682)">Run</div><div class="t" style="left:79.35px;top:139px;color:#000000;font-weight:normal;transform:scaleX(1.1481)">Build</div><div class="t" style="left:141.40px;top:139px;color:#000000;font-weight:normal;transform:scaleX(1.1048)">Plot</div><div class="t" style="left:202.88px;top:131px;color:#000000;font-weight:normal;transform:scaleX(1.1156)">Clean</div><div class="t" style="left:187.33px;top:146px;color:#000000;font-weight:normal;transform:scaleX(1.1702)">simulation</div><div class="t" style="left:291.85px;top:131px;color:#000000;font-weight:normal;transform:scaleX(1.0458)">Fast</div><div class="t" style="left:272.64px;top:146px;color:#000000;font-weight:normal;transform:scaleX(1.1630)">Optimizer</div><div class="t" style="left:354.18px;top:139px;color:#000000;font-weight:normal;transform:scaleX(1.1212)">Notes</div><div class="t" style="left:409.15px;top:139px;color:#000000;font-weight:normal;transform:scaleX(1.1472)">Config</div><div class="t" style="left:37.23px;top:180px;color:#3a3a86;font-weight:normal;transform:scaleX(1.1673)">ommand</div><div class="t" style="left:137.43px;top:178px;color:#3a3a86;font-weight:normal;transform:scaleX(1.1684)">Output</div><div class="t" style="left:47.61px;top:272px;color:#000000;font-weight:normal;transform:scaleX(1.1429)">1.1e-2</div><div class="t" style="left:147.65px;top:272px;color:#000000;font-weight:normal;transform:scaleX(1.1457)">1.2e-2</div><div class="t" style="left:247.86px;top:272px;color:#000000;font-weight:normal;transform:scaleX(1.1371)">1.3e-2</div><div class="t" style="left:353.85px;top:272px;color:#000000;font-weight:normal;transform:scaleX(1.1458)">1e-2</div><div class="t" style="left:438.35px;top:272px;color:#000000;font-weight:normal;transform:scaleX(1.1549)">all_triang</div><div class="t" style="left:445.98px;top:286px;color:#000000;font-weight:normal;transform:scaleX(1.1205)">les.csv</div><div class="t" style="left:536.22px;top:272px;color:#000000;font-weight:normal;transform:scaleX(1.1811)">detector0</div><div class="t" style="left:633.87px;top:272px;color:#000000;font-weight:normal;transform:scaleX(1.1333)">device.csv</div><div class="t" style="left:733.20px;top:272px;color:#000000;font-weight:normal;transform:scaleX(1.1656)">flat_list.inp</div><div class="t" style="left:837.35px;top:272px;color:#000000;font-weight:normal;transform:scaleX(1.1472)">ray_trace</div><div class="t" style="left:22.30px;top:686px;color:#000000;font-weight:normal;transform:scaleX(1.1380)">/home/rod/Desktop/cooke-test(new)</div>
<div class="a" style="left:94.3px;top:180px;width:19px;height:14px;background:#d3d3d3"></div>
</body></html>
